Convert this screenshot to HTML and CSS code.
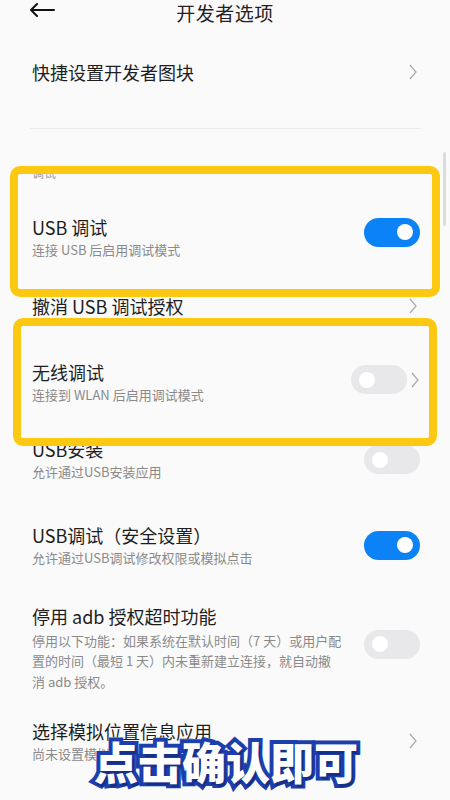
FILE: index.html
```html
<!DOCTYPE html>
<html lang="zh-CN">
<head>
<meta charset="utf-8">
<title>开发者选项</title>
<link rel="stylesheet" href="styles.css">
</head>
<body>
<div class="screen">
  <header class="topbar">
    <svg class="back" viewBox="0 0 26 14" width="26" height="14"><path d="M25 7H2M8 1L2 7l6 6" fill="none" stroke="#111" stroke-width="2" stroke-linecap="round" stroke-linejoin="round"/></svg>
    <h1 class="title">开发者选项</h1>
  </header>

  <div class="row r-quick">
    <div class="texts"><div class="t">快捷设置开发者图块</div></div>
    <svg class="chev" viewBox="0 0 8 16" width="8" height="16"><path d="M1 1l6 7-6 7" fill="none" stroke="#a8a8a8" stroke-width="1.2"/></svg>
  </div>
  <div class="divider"></div>

  <div class="section">调试</div>

  <div class="row r-usb">
    <div class="texts"><div class="t">USB 调试</div><div class="s">连接 USB 后启用调试模式</div></div>
    <div class="switch on"><span class="knob"></span></div>
  </div>

  <div class="row r-revoke">
    <div class="texts"><div class="t">撤消 USB 调试授权</div></div>
    <svg class="chev" viewBox="0 0 8 16" width="8" height="16"><path d="M1 1l6 7-6 7" fill="none" stroke="#a8a8a8" stroke-width="1.2"/></svg>
  </div>

  <div class="row r-wifi">
    <div class="texts"><div class="t">无线调试</div><div class="s">连接到 WLAN 后启用调试模式</div></div>
    <div class="ctrl">
      <div class="switch"><span class="knob"></span></div>
      <svg class="chev" viewBox="0 0 8 16" width="8" height="16"><path d="M1 1l6 7-6 7" fill="none" stroke="#a8a8a8" stroke-width="1.2"/></svg>
    </div>
  </div>

  <div class="row r-install">
    <div class="texts"><div class="t">USB安装</div><div class="s">允许通过USB安装应用</div></div>
    <div class="switch"><span class="knob"></span></div>
  </div>

  <div class="row r-secure">
    <div class="texts"><div class="t">USB调试（安全设置）</div><div class="s">允许通过USB调试修改权限或模拟点击</div></div>
    <div class="switch on"><span class="knob"></span></div>
  </div>

  <div class="row r-adb">
    <div class="texts"><div class="t">停用 adb 授权超时功能</div><div class="s desc">停用以下功能：如果系统在默认时间（7 天）或用户配<br>置的时间（最短 1 天）内未重新建立连接，就自动撤<br>消 adb 授权。</div></div>
    <div class="switch"><span class="knob"></span></div>
  </div>

  <div class="row r-mock">
    <div class="texts"><div class="t">选择模拟位置信息应用</div><div class="s">尚未设置模拟位置信息应用</div></div>
    <svg class="chev" viewBox="0 0 8 16" width="8" height="16"><path d="M1 1l6 7-6 7" fill="none" stroke="#a8a8a8" stroke-width="1.2"/></svg>
  </div>

  <div class="scrollbar"></div>
  <div class="mark mark-1"></div>
  <div class="mark mark-2"></div>
  <div class="caption">点击确认即可</div>
</div>
</body>
</html>
```

FILE: styles.css
```css
* { box-sizing: border-box; }
html, body { margin: 0; padding: 0; }
body {
  background: #fafafa;
  font-family: "Noto Sans CJK SC", "Noto Sans", sans-serif;
  color: #1c1c1c;
}
.screen {
  position: relative;
  width: 450px;
  height: 800px;
  overflow: hidden;
  background: #fafafa;
}
.topbar {
  position: relative;
  height: 26px;
  display: flex;
  align-items: center;
  justify-content: center;
}
.back {
  position: absolute;
  left: 29px;
  top: 3px;
}
.title {
  margin: 0;
  font-size: 19px;
  font-weight: 400;
  line-height: 26px;
  color: #222;
  letter-spacing: 0.5px;
}
.row {
  display: flex;
  align-items: center;
  justify-content: space-between;
  padding: 0 30px 0 32px;
}
.texts { display: flex; flex-direction: column; }
.t {
  font-size: 18px;
  line-height: 24px;
  color: #1e1e1e;
}
.s {
  font-size: 13px;
  line-height: 20px;
  color: #8a8a8a;
  margin-top: 1px;
}
.desc { line-height: 20.5px; margin-top: 3px; }
.chev { margin-right: 3px; }
.ctrl { display: flex; align-items: center; gap: 4px; margin-right: -2px; }
.r-quick { height: 92px; }
.divider {
  height: 1px;
  background: #ececef;
  margin: 10px 30px 0 30px;
}
.section {
  padding: 37px 32px 0;
  font-size: 12px;
  line-height: 14px;
  color: #a0a0a0;
  height: 55px;
}
.r-usb { height: 96px; }
.r-usb .texts { margin-top: 10px; }
.r-revoke { height: 52px; }
.r-wifi { height: 95px; }
.r-wifi .texts { margin-top: 5px; }
.r-install { height: 65px; }
.r-secure { height: 106px; }
.r-adb { height: 100px; }
.r-adb .switch { margin-top: -8px; }
.r-mock { height: 86px; }
.switch {
  position: relative;
  width: 56px;
  height: 29px;
  border-radius: 15px;
  background: #e8e8ea;
  flex: none;
}
.switch .knob {
  position: absolute;
  top: 6.5px;
  left: 8px;
  width: 16px;
  height: 16px;
  border-radius: 50%;
  background: #fff;
}
.switch.on { background: #0b82f6; }
.switch.on .knob { left: auto; right: 7px; }
.scrollbar {
  position: absolute;
  left: 443px;
  top: 152px;
  width: 3px;
  height: 74px;
  border-radius: 2px;
  background: #dcdcdc;
}
.mark {
  position: absolute;
  border: 8px solid #fdc812;
  border-radius: 10px;
}
.mark-1 { left: 10px; top: 166px; width: 430px; height: 131px; }
.mark-2 { left: 13px; top: 318px; width: 424px; height: 128px; }
.caption {
  position: absolute;
  left: 94px;
  top: 734px;
  font-size: 44px;
  line-height: 54px;
  font-weight: 900;
  color: #fff;
  -webkit-text-stroke: 8px #1d3fae;
  paint-order: stroke fill;
  text-shadow: 2px 3px 0 #16308a;
  background: linear-gradient(#ffffff 0%, #ffffff 48%, #8fe6ff 52%, #8fe6ff 100%);
  -webkit-background-clip: text;
  background-clip: text;
}
```
